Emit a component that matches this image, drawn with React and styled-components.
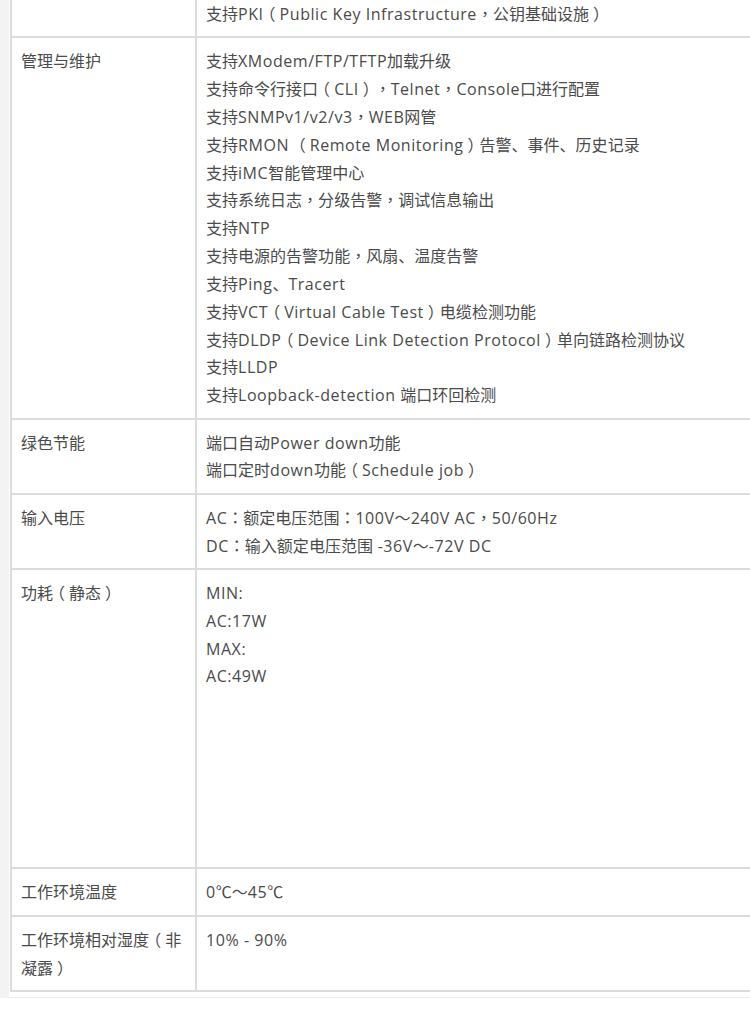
import React from "react";
import styled, { createGlobalStyle, css } from "styled-components";

const Global = createGlobalStyle`
  html, body { margin: 0; padding: 0; background: #fff; }
  body { overflow: hidden; }
`;

const Page = styled.div`
  width: 750px;
  height: 1017px;
  overflow: hidden;
  background: #fff;
`;

const Frame = styled.div`
  width: 780px;
  border-left: 9px solid #f3f3f3;
  border-bottom: 1px solid #efefef;
  padding: 0 0 5px 1px;
  font-family: "Open Sans", "Noto Sans CJK SC", sans-serif;
  font-size: 16px;
  line-height: 27.83px;
  color: #4a4a4a;
`;

const Table = styled.div`
  border-left: 1px solid #dcdcdc;
  border-bottom: 1px solid #dcdcdc;
  display: flex;
  flex-direction: column;
`;

const Row = styled.div`
  display: grid;
  grid-template-columns: 185px 1fr;
`;

const Cell = styled.div`
  box-sizing: border-box;
  border: 1px solid #dcdcdc;
  border-top: ${(p) => (p.$cut ? "none" : "1px solid #dcdcdc")};
  padding: ${(p) => (p.$cut ? "1px" : "10px")} 9px 7.5px 9px;
  min-width: 0;
`;

const Lines = styled.div`
  min-height: ${(p) => p.$minHeight || 0}px;
`;

const Line = styled.div`
  white-space: nowrap;
`;

const Latin = styled.span`
  letter-spacing: 0.55px;
  line-height: 1;
`;

const Punct = styled.span`
  line-height: 1;
  ${(p) =>
    p.$kind === "paren" &&
    css`
      font-feature-settings: "halt";
      padding: 0 4px;
    `}
  ${(p) =>
    p.$kind === "center" &&
    css`
      font-family: "Noto Sans CJK TC", "Noto Sans CJK SC", sans-serif;
    `}
`;

const kindOf = { "（": "paren", "）": "paren", "，": "center", "：": "center" };

function Rich({ text }) {
  const parts = text.split(/([\x20-\x7E]+|[（），：])/).filter(Boolean);
  return parts.map((p, i) => {
    if (/^[\x20-\x7E]+$/.test(p)) return <Latin key={i}>{p}</Latin>;
    if (kindOf[p]) return <Punct key={i} $kind={kindOf[p]}>{p}</Punct>;
    return <React.Fragment key={i}>{Array.from(p)}</React.Fragment>;
  });
}

const rows = [
  { cut: true, label: "", lines: ["支持PKI（Public Key Infrastructure，公钥基础设施）"] },
  {
    label: "管理与维护",
    lines: [
      "支持XModem/FTP/TFTP加载升级",
      "支持命令行接口（CLI），Telnet，Console口进行配置",
      "支持SNMPv1/v2/v3，WEB网管",
      "支持RMON （Remote Monitoring）告警、事件、历史记录",
      "支持iMC智能管理中心",
      "支持系统日志，分级告警，调试信息输出",
      "支持NTP",
      "支持电源的告警功能，风扇、温度告警",
      "支持Ping、Tracert",
      "支持VCT（Virtual Cable Test）电缆检测功能",
      "支持DLDP（Device Link Detection Protocol）单向链路检测协议",
      "支持LLDP",
      "支持Loopback-detection 端口环回检测",
    ],
  },
  { label: "绿色节能", lines: ["端口自动Power down功能", "端口定时down功能（Schedule job）"] },
  {
    label: "输入电压",
    lines: ["AC：额定电压范围：100V～240V AC，50/60Hz", "DC：输入额定电压范围 -36V～-72V DC"],
  },
  { label: "功耗（静态）", lines: ["MIN:", "AC:17W", "MAX:", "AC:49W"], minHeight: 280 },
  { label: "工作环境温度", lines: ["0℃～45℃"] },
  { label: "工作环境相对湿度（非凝露）", lines: ["10% - 90%"] },
];

export default function App() {
  return (
    <Page>
      <Global />
      <Frame>
        <Table>
          {rows.map((r, i) => (
            <Row key={i}>
              <Cell $cut={r.cut}>
                <Rich text={r.label} />
              </Cell>
              <Cell $cut={r.cut}>
                <Lines $minHeight={r.minHeight}>
                  {r.lines.map((l, j) => (
                    <Line key={j}>
                      <Rich text={l} />
                    </Line>
                  ))}
                </Lines>
              </Cell>
            </Row>
          ))}
        </Table>
      </Frame>
    </Page>
  );
}
